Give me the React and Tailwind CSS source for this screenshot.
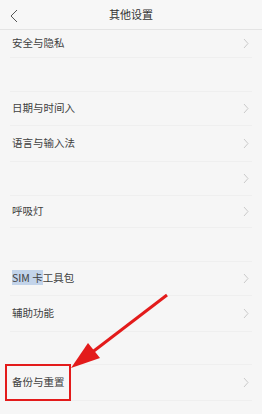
import React from "react";

const rows = [
  { label: "安全与隐私", h: "h-[28px]" },
  { label: "", h: "h-[34px]" },
  { label: "日期与时间入", h: "h-[34px]" },
  { label: "语言与输入法", h: "h-[36px]" },
  { label: "", chevron: true, h: "h-[34px]" },
  { label: "呼吸灯", h: "h-[32px]" },
  { label: "", h: "h-[34px]" },
  { label: "SIM", h: "h-[34px]" },
  { label: "辅助功能", h: "h-[36px]" },
  { label: "", h: "h-[33px]" },
  { label: "备份与重置", h: "h-[36px]" },
];

const Chevron = () => (
  <svg width="6" height="11" viewBox="0 0 6 11" className="text-[#cacaca]">
    <path d="M1 1l4 4.5-4 4.5" fill="none" stroke="currentColor" strokeWidth="1" />
  </svg>
);

const Row = ({ row }) => {
  const showChevron = row.label !== "" || row.chevron;
  return (
    <div className={`${row.h} mx-[10px] flex items-center justify-between border-b border-[#efefef] pl-[2px] pr-[3px]`}>
      <span className="text-[10.5px] text-[#404040] leading-none">
        {row.label === "SIM" ? (
          <>
            <span className="bg-[#c3d4ea]">SIM 卡</span>工具包
          </>
        ) : (
          row.label
        )}
      </span>
      {showChevron ? <Chevron /> : null}
    </div>
  );
};

export default function App() {
  return (
    <div
      className="relative w-[262px] h-[414px] overflow-hidden bg-[#f6f6f6]"
      style={{ fontFamily: '"Noto Sans CJK SC", "Noto Sans", sans-serif' }}
    >
      <div className="h-[30px] flex items-center justify-center relative border-b border-[#e4e4e4] bg-[#f7f7f7]">
        <svg width="8" height="14" viewBox="0 0 8 14" className="absolute left-[10px] top-[9px] text-[#555]">
          <path d="M7 1L1 7l6 6" fill="none" stroke="currentColor" strokeWidth="1" />
        </svg>
        <span className="text-[11px] text-[#333]">其他设置</span>
      </div>
      {rows.map((row, i) => (
        <Row key={i} row={row} />
      ))}

      <div className="absolute left-[5px] top-[364px] w-[66px] h-[37px] border-2 border-[#e31b1b]" />
      <svg className="absolute left-0 top-0" width="262" height="414" viewBox="0 0 262 414">
        <line x1="167" y1="295" x2="82" y2="360" stroke="#e31b1b" strokeWidth="3" />
        <polygon points="71,368 88,343 100,358" fill="#e31b1b" />
      </svg>
    </div>
  );
}
